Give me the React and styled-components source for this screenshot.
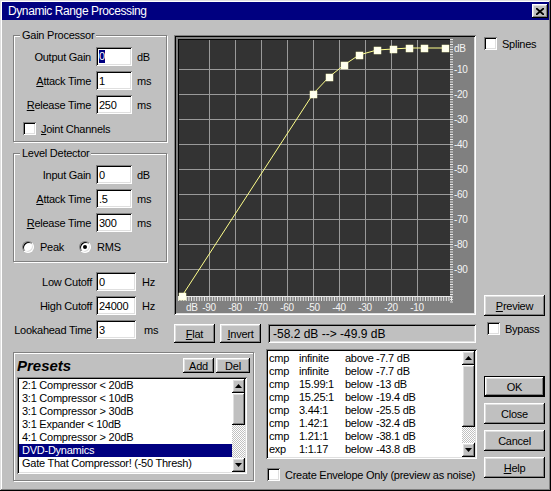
import React from 'react';
import styled, { createGlobalStyle, css } from 'styled-components';

const Global = createGlobalStyle`
  html, body { margin: 0; padding: 0; background: #c0c0c0; }
  body {
    font-family: "Liberation Sans", Arial, sans-serif;
    font-size: 11px;
    letter-spacing: -0.25px;
    color: #000;
  }
  * { box-sizing: border-box; }
  u { text-decoration-thickness: 1px; text-underline-offset: 1px; }
`;

const raised = css`
  box-shadow: inset -1px -1px #000, inset 1px 1px #fff, inset -2px -2px #808080, inset 2px 2px #dfdfdf;
`;
const sunken = css`
  box-shadow: inset 1px 1px #808080, inset -1px -1px #fff, inset 2px 2px #000, inset -2px -2px #dfdfdf;
`;

const Window = styled.div`
  width: 551px;
  height: 491px;
  padding: 2px;
  background: #c0c0c0;
  box-shadow: inset -1px -1px #000, inset 1px 1px #dfdfdf, inset -2px -2px #808080, inset 2px 2px #fff;
  display: flex;
  flex-direction: column;
  overflow: hidden;
`;

const TitleBar = styled.div`
  height: 18px;
  background: #000080;
  color: #fff;
  display: flex;
  align-items: center;
  justify-content: space-between;
  padding: 0 1px 0 6px;
  font-size: 12px;
  letter-spacing: -0.4px;
`;

const CloseBtn = styled.div`
  width: 16px;
  height: 14px;
  background: #c0c0c0;
  ${raised};
  display: flex;
  align-items: center;
  justify-content: center;
`;

const Content = styled.div`
  padding: 8px 0 0 11px;
  display: flex;
  flex-direction: column;
`;

const TopRow = styled.div`
  display: flex;
  height: 315px;
`;

const LeftCol = styled.div`
  width: 154px;
  display: flex;
  flex-direction: column;
`;

const Group = styled.div`
  margin-top: ${p => p.$mt || 0}px;
  border: 1px solid #808080;
  box-shadow: inset 1px 1px #fff, 1px 1px #fff;
  padding-bottom: ${p => p.$pb || 0}px;
`;

const GroupLabel = styled.div`
  width: fit-content;
  margin: -7px 0 0 6px;
  padding: 0 2px;
  background: #c0c0c0;
  line-height: 13px;
`;

const FieldGrid = styled.div`
  display: grid;
  grid-template-columns: ${p => p.$cols};
  column-gap: ${p => p.$gap}px;
  row-gap: 5px;
  grid-auto-rows: 19px;
  align-items: center;
  margin-top: ${p => p.$mt}px;
`;

const FieldLabel = styled.div`
  text-align: right;
  white-space: nowrap;
`;

const Field = styled.div`
  height: 19px;
  background: #fff;
  ${sunken};
  padding: 0 3px;
  display: flex;
  align-items: center;
`;

const Selected = styled.span`
  background: #000080;
  color: #fff;
  line-height: 13px;
`;

const Unit = styled.div`
  padding-left: ${p => p.$pl || 0}px;
`;

const CheckRow = styled.div`
  display: flex;
  align-items: center;
  gap: 5px;
  height: 13px;
  margin: ${p => p.$m || '0'};
  white-space: nowrap;
`;

const Check = styled.div`
  width: 13px;
  height: 13px;
  flex: none;
  background: #fff;
  ${sunken};
`;

const RadioRow = styled.div`
  display: flex;
  align-items: center;
  height: 13px;
  margin: 8px 0 0 8px;
  gap: 15px;
`;

const RadioItem = styled.div`
  display: flex;
  align-items: center;
  gap: 6px;
`;

const Radio = styled.div`
  width: 12px;
  height: 12px;
  border-radius: 50%;
  background: #fff;
  border: 1px solid;
  border-color: #808080 #fff #fff #808080;
  box-shadow: inset 1px 1px #000, inset -1px -1px #dfdfdf;
  display: flex;
  align-items: center;
  justify-content: center;
`;

const RadioDot = styled.div`
  width: 4px;
  height: 4px;
  border-radius: 50%;
  background: #000;
`;

const GraphCol = styled.div`
  width: 302px;
  margin-left: 7px;
  display: flex;
  flex-direction: column;
`;

const GraphFrame = styled.div`
  margin-top: 7px;
  height: 280px;
  padding: 2px;
  background: #808080;
  ${sunken};
  display: flex;
`;

const GraphButtons = styled.div`
  margin-top: 9px;
  display: flex;
  height: 19px;
`;

const Readout = styled.div`
  flex: 1;
  margin-left: 7px;
  ${sunken};
  padding: 0 5px;
  display: flex;
  align-items: center;
  font-size: 12px;
  letter-spacing: 0;
`;

const Button = styled.button`
  font: inherit;
  letter-spacing: inherit;
  color: #000;
  background: #c0c0c0;
  border: 0;
  padding: 0;
  margin: 0 0 0 ${p => p.$ml || 0}px;
  width: ${p => p.$w}px;
  height: ${p => p.$h || 21}px;
  flex: none;
  ${p => p.$default
    ? css`box-shadow: inset 0 0 0 1px #000, inset -2px -2px #000, inset 2px 2px #fff, inset -3px -3px #808080, inset 3px 3px #dfdfdf;`
    : raised};
  display: flex;
  align-items: center;
  justify-content: center;
`;

const RightCol = styled.div`
  width: 61px;
  margin-left: 8px;
  display: flex;
  flex-direction: column;
  padding: 9px 0 8px;
`;

const Spacer = styled.div`
  flex: 1;
`;

const BottomRow = styled.div`
  margin-top: 6px;
  display: flex;
  align-items: flex-start;
`;

const PresetsGroup = styled(Group)`
  margin-top: 3px;
  width: 241px;
  height: 129px;
  padding: 5px 3px 0 3px;
  display: flex;
  flex-direction: column;
`;

const PresetsHeader = styled.div`
  display: flex;
  align-items: center;
  height: 15px;
  gap: 2px;
`;

const PresetsTitle = styled.div`
  flex: 1;
  font-size: 15px;
  font-weight: bold;
  font-style: italic;
  letter-spacing: 0;
`;

const ListBox = styled.div`
  width: ${p => p.$w}px;
  height: ${p => p.$h}px;
  margin-top: ${p => p.$mt || 0}px;
  background: #fff;
  ${sunken};
  padding: 2px;
  display: flex;
`;

const ListItems = styled.div`
  flex: 1;
  overflow: hidden;
  padding-top: ${p => p.$pt || 0}px;
`;

const Item = styled.div`
  height: 13px;
  line-height: 13px;
  padding-left: 3px;
  white-space: nowrap;
  background: ${p => (p.$sel ? '#000080' : 'transparent')};
  color: ${p => (p.$sel ? '#fff' : '#000')};
`;

const EnvRow = styled.div`
  display: grid;
  grid-template-columns: 30px 46px 31px auto;
  height: 13px;
  line-height: 13px;
  padding-left: 1px;
  white-space: nowrap;
`;

const ScrollBar = styled.div`
  width: 13px;
  display: flex;
  flex-direction: column;
`;

const ScrollBtn = styled.div`
  height: 14px;
  background: #c0c0c0;
  ${raised};
  display: flex;
  align-items: center;
  justify-content: center;
`;

const Thumb = styled.div`
  height: ${p => p.$h}px;
  background: #c0c0c0;
  ${raised};
`;

const Track = styled.div`
  flex: 1;
  background: repeating-conic-gradient(#c0c0c0 0 25%, #fff 0 50%) 0 0 / 2px 2px;
`;

const EnvCol = styled.div`
  width: 211px;
  margin-left: 12px;
  display: flex;
  flex-direction: column;
`;

const ButtonCol = styled.div`
  width: 61px;
  margin-left: 7px;
  padding-top: 27px;
  display: flex;
  flex-direction: column;
  gap: 6px;
`;

const Arrow = ({ down }) => (
  <svg width="7" height="4" viewBox="0 0 7 4">
    <polygon points={down ? '0,0 7,0 3.5,4' : '0,4 7,4 3.5,0'} fill="#000" />
  </svg>
);

const Scroll = ({ thumb }) => (
  <ScrollBar>
    <ScrollBtn><Arrow /></ScrollBtn>
    <Thumb $h={thumb} />
    <Track />
    <ScrollBtn><Arrow down /></ScrollBtn>
  </ScrollBar>
);

const gx = d => 267 + 2.6 * d;
const gy = d => 7 - 2.5 * d;
const ticks = [-90, -80, -70, -60, -50, -40, -30, -20, -10];
const pts = [
  [6, 259], [137, 57], [153, 40], [168, 28], [183, 18],
  [201, 13], [217, 12], [233, 11], [248, 11], [269, 11],
];

const Chart = () => (
  <svg width="298" height="276" viewBox="0 0 298 276">
    <rect x="0" y="0" width="298" height="276" fill="#808080" />
    <rect x="2" y="2" width="272" height="257" fill="#333333" />
    <line x1="2" y1="2.5" x2="274" y2="2.5" stroke="#000" strokeWidth="1" />
    <line x1="2.5" y1="2" x2="2.5" y2="259" stroke="#000" strokeWidth="1" />
    {ticks.map(d => (
      <line key={'v' + d} x1={Math.round(gx(d)) + 0.5} y1="3" x2={Math.round(gx(d)) + 0.5} y2="259"
        stroke="#9a9a9a" strokeWidth="1" />
    ))}
    {ticks.map(d => (
      <line key={'h' + d} x1="3" y1={gy(d) + 0.5} x2="277" y2={gy(d) + 0.5}
        stroke="#9a9a9a" strokeWidth="1" />
    ))}
    <line x1="275.5" y1="2" x2="275.5" y2="266" stroke="#e8e8e8" strokeWidth="3" strokeDasharray="1 1.5" />
    <line x1="2" y1="262" x2="276" y2="262" stroke="#e8e8e8" strokeWidth="4" strokeDasharray="1 1.6" />
    <line x1="2" y1="259.5" x2="276" y2="259.5" stroke="#e8e8e8" strokeWidth="1" />
    <g fill="#f4f4f4" fontFamily="Liberation Sans, Arial, sans-serif" fontSize="10" letterSpacing="-0.3">
      <text x="278" y="14.5">dB</text>
      {ticks.slice().reverse().map(d => (
        <text key={'ry' + d} x="278" y={gy(d) + 4}>{d}</text>
      ))}
      <text x="10" y="274">dB</text>
      {ticks.map(d => (
        <text key={'bx' + d} x={gx(d)} y="274" textAnchor="middle">{d}</text>
      ))}
    </g>
    <polyline points={pts.map(p => p.join(',')).join(' ')} fill="none" stroke="#ffff8c" strokeWidth="1" />
    {pts.map(([x, y], i) => (
      <rect key={i} x={x - 3} y={y - 3} width="7" height="7" fill="#fffff0" stroke="#ffffc0" strokeWidth="0.5" />
    ))}
  </svg>
);

const presets = [
  '2:1 Compressor < 20dB',
  '3:1 Compressor < 10dB',
  '3:1 Compressor > 30dB',
  '3:1 Expander < 10dB',
  '4:1 Compressor > 20dB',
  'DVD-Dynamics',
  'Gate That Compressor! (-50 Thresh)',
  'Limiter 20:1 @ 0dB',
];

const env = [
  ['cmp', 'infinite', 'above', '-7.7 dB'],
  ['cmp', 'infinite', 'below', '-7.7 dB'],
  ['cmp', '15.99:1', 'below', '-13 dB'],
  ['cmp', '15.25:1', 'below', '-19.4 dB'],
  ['cmp', '3.44:1', 'below', '-25.5 dB'],
  ['cmp', '1.42:1', 'below', '-32.4 dB'],
  ['cmp', '1.21:1', 'below', '-38.1 dB'],
  ['exp', '1:1.17', 'below', '-43.8 dB'],
];

export default function App() {
  return (
    <>
      <Global />
      <Window>
        <TitleBar>
          <span>Dynamic Range Processing</span>
          <CloseBtn>
            <svg width="8" height="7" viewBox="0 0 8 7">
              <path d="M0 0 L8 7 M8 0 L0 7" stroke="#000" strokeWidth="1.8" />
            </svg>
          </CloseBtn>
        </TitleBar>
        <Content>
          <TopRow>
            <LeftCol>
              <Group $mt={7} $pb={6}>
                <GroupLabel>Gain Processor</GroupLabel>
                <FieldGrid $cols="77px 36px auto" $gap={5} $mt={5}>
                  <FieldLabel>Output Gain</FieldLabel>
                  <Field><Selected>0</Selected></Field>
                  <Unit>dB</Unit>
                  <FieldLabel><u>A</u>ttack Time</FieldLabel>
                  <Field>1</Field>
                  <Unit>ms</Unit>
                  <FieldLabel><u>R</u>elease Time</FieldLabel>
                  <Field>250</Field>
                  <Unit>ms</Unit>
                </FieldGrid>
                <CheckRow $m="8px 0 0 9px">
                  <Check />
                  <span><u>J</u>oint Channels</span>
                </CheckRow>
              </Group>
              <Group $mt={11} $pb={8}>
                <GroupLabel>Level Detector</GroupLabel>
                <FieldGrid $cols="77px 36px auto" $gap={5} $mt={5}>
                  <FieldLabel>Input Gain</FieldLabel>
                  <Field>0</Field>
                  <Unit>dB</Unit>
                  <FieldLabel><u>A</u>ttack Time</FieldLabel>
                  <Field>.5</Field>
                  <Unit>ms</Unit>
                  <FieldLabel><u>R</u>elease Time</FieldLabel>
                  <Field>300</Field>
                  <Unit>ms</Unit>
                </FieldGrid>
                <RadioRow>
                  <RadioItem><Radio /><span>Peak</span></RadioItem>
                  <RadioItem><Radio><RadioDot /></Radio><span>RMS</span></RadioItem>
                </RadioRow>
              </Group>
              <FieldGrid $cols="79px 40px auto" $gap={4} $mt={10}>
                <FieldLabel>Low Cutoff</FieldLabel>
                <Field>0</Field>
                <Unit $pl={2}>Hz</Unit>
                <FieldLabel>High Cutoff</FieldLabel>
                <Field>24000</Field>
                <Unit $pl={2}>Hz</Unit>
                <FieldLabel>Lookahead Time</FieldLabel>
                <Field>3</Field>
                <Unit $pl={4}>ms</Unit>
              </FieldGrid>
            </LeftCol>
            <GraphCol>
              <GraphFrame>
                <Chart />
              </GraphFrame>
              <GraphButtons>
                <Button $w={41} $h={19}><span><u>F</u>lat</span></Button>
                <Button $w={41} $h={19} $ml={5}><span><u>I</u>nvert</span></Button>
                <Readout>-58.2 dB --&gt; -49.9 dB</Readout>
              </GraphButtons>
            </GraphCol>
            <RightCol>
              <CheckRow>
                <Check />
                <span>Splines</span>
              </CheckRow>
              <Spacer />
              <Button $w={61}><span><u>P</u>review</span></Button>
              <CheckRow $m="6px 0 0 3px">
                <Check />
                <span>Bypass</span>
              </CheckRow>
            </RightCol>
          </TopRow>
          <BottomRow>
            <PresetsGroup>
              <PresetsHeader>
                <PresetsTitle>Presets</PresetsTitle>
                <Button $w={31} $h={15}>Add</Button>
                <Button $w={34} $h={15}>Del</Button>
              </PresetsHeader>
              <ListBox $w={230} $h={97} $mt={4}>
                <ListItems>
                  {presets.map(p => (
                    <Item key={p} $sel={p === 'DVD-Dynamics'}>{p}</Item>
                  ))}
                </ListItems>
                <Scroll thumb={32} />
              </ListBox>
            </PresetsGroup>
            <EnvCol>
              <ListBox $w={211} $h={110}>
                <ListItems $pt={1}>
                  {env.map((r, i) => (
                    <EnvRow key={i}>
                      {r.map((c, j) => <span key={j}>{c}</span>)}
                    </EnvRow>
                  ))}
                </ListItems>
                <Scroll thumb={62} />
              </ListBox>
              <CheckRow $m="9px 0 0 1px">
                <Check />
                <span>Create Envelope Only (preview as noise)</span>
              </CheckRow>
            </EnvCol>
            <ButtonCol>
              <Button $w={61} $default>OK</Button>
              <Button $w={61}>Close</Button>
              <Button $w={61}>Cancel</Button>
              <Button $w={61}><span><u>H</u>elp</span></Button>
            </ButtonCol>
          </BottomRow>
        </Content>
      </Window>
    </>
  );
}
